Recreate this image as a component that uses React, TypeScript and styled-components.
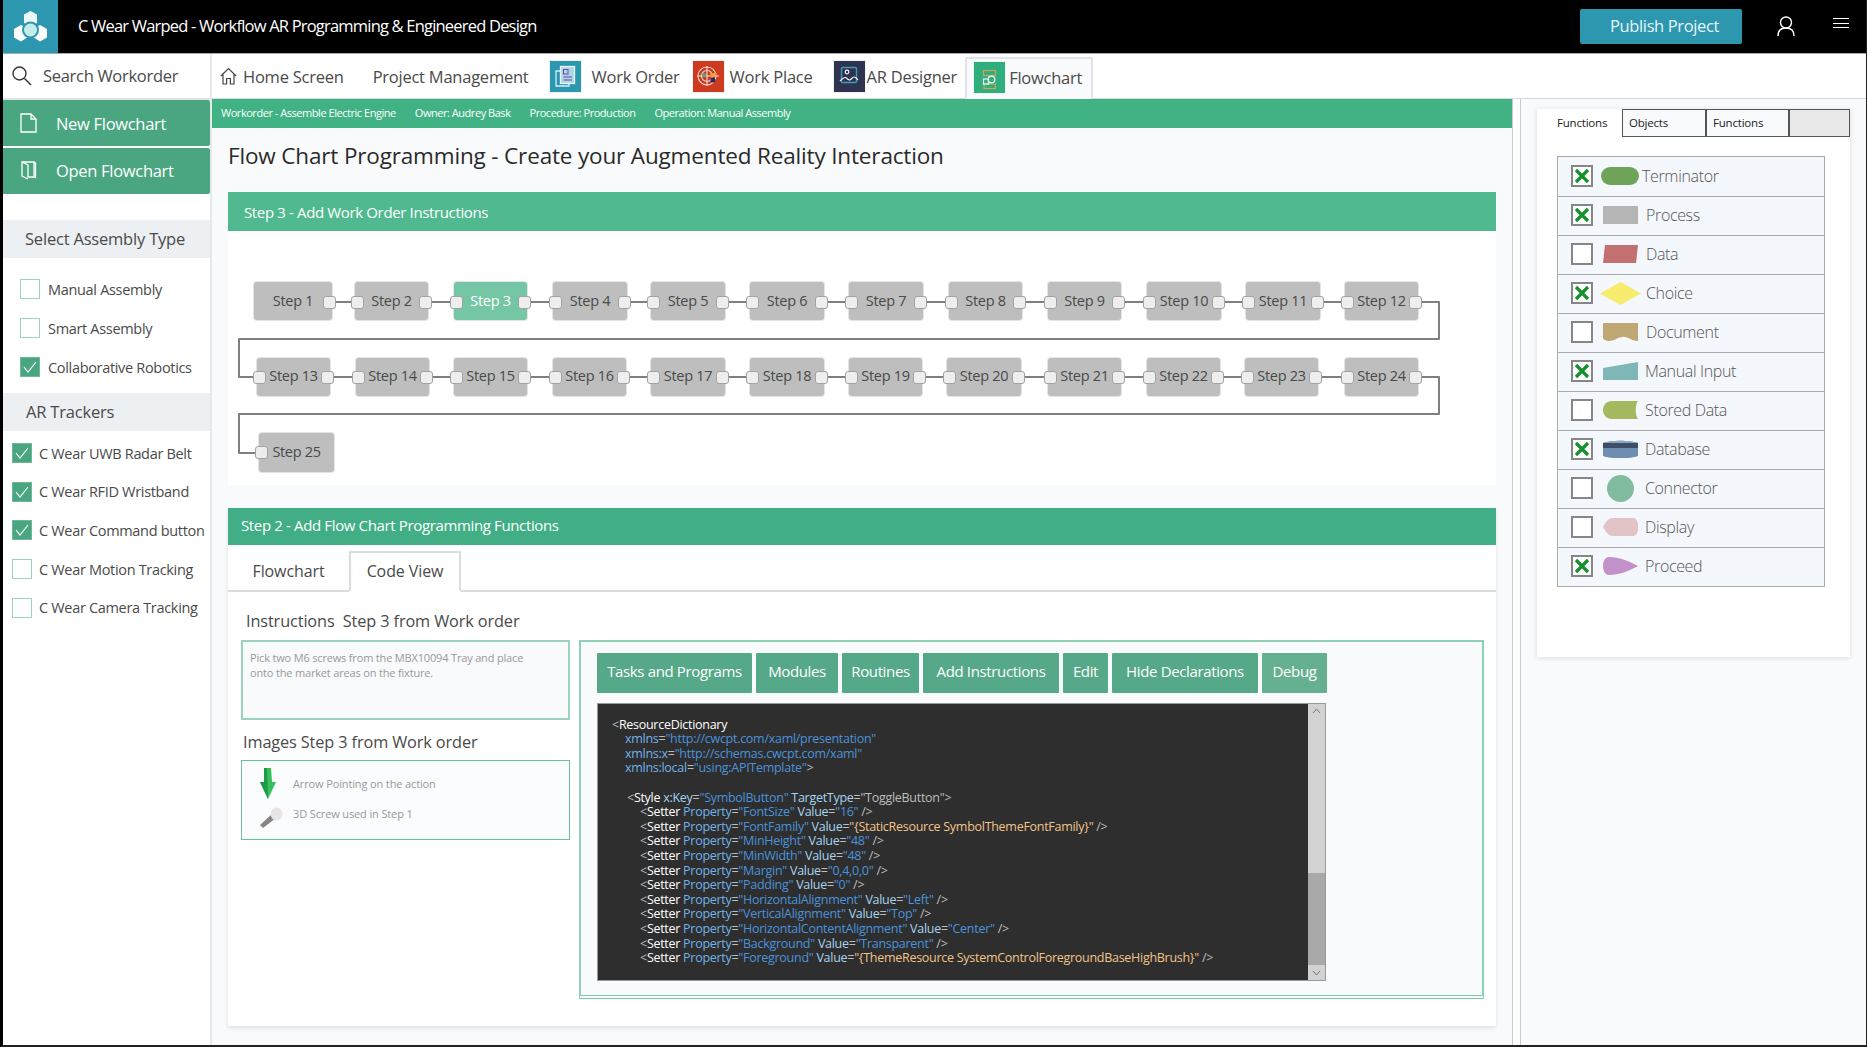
import React from "react";
import styled, { createGlobalStyle } from "styled-components";

const Global = createGlobalStyle`
  html, body { margin: 0; padding: 0; background: #000; }
  body { font-family: "Open Sans", "Noto Sans", "Liberation Sans", sans-serif; }
  * { box-sizing: border-box; }
`;

const Frame = styled.div`
  width: 1867px; height: 1047px; overflow: hidden;
  display: flex; flex-direction: column;
  background: #f9fafc;
  border-left: 3px solid #000; border-right: 1px solid #222; border-bottom: 2px solid #222;
`;
const Header = styled.header`
  height: 54px; flex: none; background: #000; border-bottom: 1px solid #a9a9a9;
  display: flex; align-items: center;
`;
const LogoBox = styled.div`
  width: 55px; height: 53px; background: #2e97b0; display: flex; align-items: center; justify-content: center;
`;
const AppTitle = styled.div`
  margin-left: 20px; color: #fff; font-size: 16.5px; letter-spacing: -0.8px; flex: 1; white-space: nowrap; padding-bottom: 3px;
`;
const Publish = styled.button`
  width: 162px; height: 35px; margin-right: 35px; border: none; border-radius: 2px;
  background: #2e97b0; color: #e3f6fa; font: inherit; font-size: 16.5px; letter-spacing: -0.38px; padding: 0 0 3px 7px;
`;
const HeaderIcon = styled.div<{ $mr: number; $mb: number }>`
  display: flex; margin-right: ${(p) => p.$mr}px; margin-bottom: ${(p) => p.$mb}px;
`;
const Body = styled.div`flex: 1; display: flex; min-height: 0;`;

const Sidebar = styled.aside`
  width: 209px; flex: none; background: #fff; border-right: 2px solid #e6e8ea; display: flex; flex-direction: column;
`;
const SearchRow = styled.div`
  height: 46px; flex: none; display: flex; align-items: center; padding: 0 0 1px 9px; gap: 11px;
  border-bottom: 2px solid #dfe2e6; font-size: 16.5px; color: #4a4a4a; letter-spacing: -0.3px;
`;
const GreenAction = styled.div<{ $up?: number }>`
  height: 46px; flex: none; background: #4aa681; color: #fff; display: flex; align-items: center;
  padding: 0 0 ${(p) => p.$up ?? 0}px 17px; gap: 19px; font-size: 16.5px; letter-spacing: -0.3px; margin-bottom: 2px;
  border-radius: 0 2px 2px 0;
`;
const SideHeading = styled.div<{ $pl: number; $mt: number }>`
  height: 38px; flex: none; margin-top: ${(p) => p.$mt}px; background: #edf0f3; color: #4a4a4a;
  display: flex; align-items: center; padding: 0 0 2px ${(p) => p.$pl}px; font-size: 16.5px; letter-spacing: -0.2px;
`;
const CheckList = styled.div<{ $pl: number; $gap: number; $pt: number }>`
  display: flex; flex-direction: column; padding: ${(p) => p.$pt}px 0 0 ${(p) => p.$pl}px; gap: ${(p) => p.$gap}px;
`;
const CheckRow = styled.div<{ $gap: number }>`
  height: 20px; display: flex; align-items: center; gap: ${(p) => p.$gap}px; font-size: 14.5px; color: #4a4a4a; letter-spacing: -0.32px; white-space: nowrap;
`;
const CheckBox = styled.span<{ $on?: boolean }>`
  width: 20px; height: 20px; flex: none; display: flex; align-items: center; justify-content: center;
  background: ${(p) => (p.$on ? "#4aa681" : "#fff")};
  border: 1.5px solid ${(p) => (p.$on ? "#6db89a" : "#9fd3c0")};
`;

const Column = styled.div`flex: 1; min-width: 0; display: flex; flex-direction: column;`;
const NavBar = styled.nav`
  height: 45px; flex: none; background: #fff; border-bottom: 1px solid #d5d8dc; display: flex; align-items: stretch; padding-left: 8px;
`;
const NavItem = styled.div<{ $ml?: number; $gap?: number; $active?: boolean }>`
  display: flex; align-items: center; margin-left: ${(p) => p.$ml ?? 0}px; gap: ${(p) => p.$gap ?? 0}px;
  font-size: 16.5px; color: #4a4a4a; letter-spacing: -0.24px; white-space: nowrap;
  ${(p) =>
    p.$active
      ? "margin-top: 3px; padding: 0 9px 3px 7px; background: #f9fafc; border: 2px solid #e0e3e7; border-bottom: none; border-radius: 2px 2px 0 0; margin-bottom: -1px;"
      : ""}
`;
const Tile = styled.div<{ $bg: string }>`
  width: 31px; height: 31px; background: ${(p) => p.$bg}; display: flex; align-items: center; justify-content: center; box-shadow: 0 0 0 1px #eef0f2;
`;
const Content = styled.div`flex: 1; min-height: 0; display: flex;`;
const Main = styled.main`width: 1300px; flex: none; display: flex; flex-direction: column;`;
const InfoBar = styled.div`
  height: 29px; flex: none; background: #40b283; color: #fff; display: flex; align-items: center;
  padding: 0 0 3px 9px; gap: 19px; font-size: 11px; letter-spacing: -0.46px; margin-right: -2px;
`;
const PageTitle = styled.h1`
  margin: 0 0 0 16px; height: 64px; display: flex; align-items: center; font-size: 22.5px; font-weight: 400; color: #2a2a2a; letter-spacing: -0.16px; padding-bottom: 10px;
`;
const Card = styled.section<{ $h: number; $mt?: number; $shadow?: boolean }>`
  margin: ${(p) => p.$mt ?? 0}px 16px 0; height: ${(p) => p.$h}px; background: #fff; flex: none; display: flex; flex-direction: column;
  ${(p) => (p.$shadow ? "box-shadow: 0 2px 4px rgba(0,0,0,.1);" : "")}
`;
const SectionBar = styled.div<{ $bg: string; $h: number; $pl: number; $dy: number }>`
  height: ${(p) => p.$h}px; flex: none; background: ${(p) => p.$bg}; color: #fff; display: flex; align-items: center;
  padding: ${(p) => (p.$dy > 0 ? p.$dy : 0)}px 0 ${(p) => (p.$dy < 0 ? -p.$dy : 0)}px ${(p) => p.$pl}px; font-size: 15px; letter-spacing: -0.36px;
`;
const Canvas = styled.div`position: relative; flex: 1;`;
const Wires = styled.svg`position: absolute; left: 0; top: 0; width: 100%; height: 100%;`;
const StepNode = styled.div<{ $x: number; $y: number; $w: number; $on?: boolean; $h?: number; $up?: number }>`
  position: absolute; left: ${(p) => p.$x}px; top: ${(p) => p.$y}px; width: ${(p) => p.$w}px; height: ${(p) => p.$h ?? 38}px;
  background: ${(p) => (p.$on ? "#75c6a4" : "#bdbebd")}; color: ${(p) => (p.$on ? "#fff" : "#4a4a4a")};
  border-radius: 3px; box-shadow: 0 0 0 1px rgba(220,222,222,.8);
  display: flex; align-items: center; justify-content: center; font-size: 14.5px; letter-spacing: -0.32px;
  padding-bottom: ${(p) => p.$up ?? 0}px;
`;
const Port = styled.span<{ $side: "l" | "r"; $top?: number }>`
  position: absolute; top: ${(p) => p.$top ?? 14}px; ${(p) => (p.$side === "l" ? "left: -4px;" : "right: -4px;")}
  width: 13px; height: 13px; background: #eee; border: 1.5px solid #a2a2a2; border-radius: 3px;
`;

const Tabs = styled.div`
  height: 47px; flex: none; display: flex; align-items: flex-end; border-bottom: 2px solid #dcdcdc;
`;
const Tab = styled.div<{ $active?: boolean; $w: number }>`
  width: ${(p) => p.$w}px; height: 41px; display: flex; align-items: center; justify-content: center;
  font-size: 16px; color: #4a4a4a; letter-spacing: -0.1px; margin-bottom: -2px; padding-bottom: 1px;
  ${(p) => (p.$active ? "background:#fff; border:2px solid #dcdcdc; border-bottom:2px solid #fff;" : "")}
`;
const Work = styled.div`flex: 1; display: flex; gap: 9px; padding: 0 12px 0 13px;`;
const LeftCol = styled.div`width: 329px; flex: none; display: flex; flex-direction: column;`;
const SubLabel = styled.div<{ $h: number; $pl: number; $pt: number }>`
  height: ${(p) => p.$h}px; display: flex; align-items: center; padding: ${(p) => p.$pt}px 0 0 ${(p) => p.$pl}px; font-size: 16.3px; color: #4a4a4a; letter-spacing: -0.12px; white-space: pre;
`;
const InstrBox = styled.div`
  height: 80px; background: #f9fafc; border: 2px solid #9ad4be; padding: 8px 7px; font-size: 11px; line-height: 15px; color: #999; letter-spacing: -0.17px;
`;
const ImgBox = styled.div`
  height: 80px; background: #fbfcfe; border: 1.5px solid #6cc0a0; display: flex; flex-direction: column; padding-left: 17px;
`;
const ImgRow = styled.div<{ $h: number; $gap: number }>`
  height: ${(p) => p.$h}px; display: flex; align-items: center; gap: ${(p) => p.$gap}px; font-size: 11px; color: #999; letter-spacing: -0.13px;
`;
const ImgText = styled.span<{ $up: number }>`margin-bottom: ${(p) => p.$up}px;`;
const CodePanel = styled.div`
  flex: 1; height: 359px; margin-top: 48px; background: #f9fafc; border: 2px solid #8fd0b8; border-bottom: 4px double #7cc8ac; padding: 11px 0 0 16px;
`;
const Toolbar = styled.div`display: flex; gap: 4px; height: 40px;`;
const ToolBtn = styled.div<{ $w: number; $light?: boolean; $raised?: boolean }>`
  width: ${(p) => p.$w}px; background: ${(p) => (p.$light ? "#66b092" : "#55a888")}; color: #fff; border-radius: 1px;
  display: flex; align-items: center; justify-content: center; font-size: 15px; letter-spacing: -0.36px; padding-bottom: ${(p) => (p.$raised ? 5 : 4)}px;
`;
const CodeWrap = styled.div`margin-top: 10px; width: 729px; height: 278px; display: flex; border: 1px solid #999;`;
const Code = styled.pre`
  margin: 0; flex: 1; background: #2e2e2e; padding: 13.5px 0 0 14px; font-family: inherit; font-size: 12.5px; line-height: 14.62px; letter-spacing: -0.28px; color: #fff; overflow: hidden;
`;
const CodeLine = styled.div<{ $i: number }>`height: 14.62px; padding-left: ${(p) => p.$i}px;`;
const Tok = styled.span<{ $c: string }>`color: ${(p) => p.$c};`;
const Scroll = styled.div`width: 17px; background: #d2d2d2; display: flex; flex-direction: column; align-items: center; justify-content: space-between; position: relative;`;
const Thumb = styled.div`position: absolute; left: 0; right: 0; top: 169px; bottom: 15px; background: #a9a9a9;`;
const Arrow = styled.svg`position: relative; margin: 4px 0;`;

const Strip = styled.div`width: 9px; flex: none; background: #fff; border-left: 1px solid #c7cad0; border-right: 1px solid #c7cad0;`;
const RightPanel = styled.div`flex: 1; padding: 10px 0 0 16px;`;
const FnCard = styled.div`width: 313px; height: 548px; background: #fff; box-shadow: 0 1px 5px rgba(0,0,0,.12);`;
const FnTabs = styled.div`display: flex; height: 28px;`;
const FnTab = styled.div<{ $active?: boolean; $grey?: boolean; $w: number }>`
  width: ${(p) => p.$w}px; font-size: 11.5px; color: #222; letter-spacing: -0.2px; display: flex; align-items: center;
  padding: 0 0 2px ${(p) => (p.$active ? 20 : 6)}px;
  background: ${(p) => (p.$active ? "#fff" : p.$grey ? "#e8e8e8" : "#f9fafc")};
  ${(p) => (p.$active ? "" : "border: 1px solid #555; border-left-width: 1.5px;")}
`;
const FnList = styled.div`margin: 19px 0 0 20px; width: 268px; border: 1px solid #a9abad;`;
const FnRow = styled.div<{ $first?: boolean }>`
  height: 39px; background: #f4f7fb; display: flex; align-items: center; padding: 0 0 2px 13px;
  ${(p) => (p.$first ? "" : "border-top: 1px solid #a9abad;")}
  font-size: 16px; font-weight: 300; color: #555; letter-spacing: -0.35px;
`;
const FnCheck = styled.span`
  width: 22px; height: 22px; flex: none; background: #fff; border: 2px solid #868686; display: flex; align-items: center; justify-content: center;
`;
const ShapeSlot = styled.span`width: 52px; flex: none; display: flex; justify-content: center; margin-right: 2px; padding-left: 2px;`;
const FnLabel = styled.span<{ $off: number }>`margin-left: ${(p) => p.$off}px;`;

/* ---------- icons ---------- */
const Logo = () => (
  <svg width="33" height="32" viewBox="0 0 33 32">
    <path d="M16.5 0l6.5 3.5V12l-6.5 3.5L10 12V3.5z" fill="#eef7f8" />
    <path d="M7 14l7 4v8l-7 4.5L0 26.500v-8.500z" fill="#fff" />
    <path d="M26 14l7 4v8.500l-7 4-7-4.500v-8z" fill="#fff" />
    <circle cx="16.500" cy="19" r="8.500" fill="#2e97b0" />
    <circle cx="16.500" cy="19" r="6.500" fill="#c4ecea" />
  </svg>
);
const SearchIcon = () => (
  <svg width="20" height="20" viewBox="0 0 20 20" fill="none" stroke="#333" strokeWidth="1.4">
    <circle cx="7.5" cy="7.5" r="6.5" /><path d="M12.5 12.5l6.5 6.5" />
  </svg>
);
const HomeIcon = () => (
  <svg width="17" height="18" viewBox="0 0 17 18" fill="none" stroke="#444" strokeWidth="1.2">
    <path d="M.8 9L8.5 1.5 16.2 9M3 7.5V17h3.6v-5.5h3.8V17H14V7.5" />
  </svg>
);
const FileIcon = () => (
  <svg width="17" height="20" viewBox="0 0 17 20" fill="none" stroke="#fff" strokeWidth="1.3">
    <path d="M1 1h10l5 5v13H1zM11 1v5h5" />
  </svg>
);
const OpenIcon = () => (
  <svg width="17" height="20" viewBox="0 0 17 20" fill="none" stroke="#fff" strokeWidth="1.3">
    <path d="M2 2h12v15H8V5L2 2v14l6 3M14 2l1.5 1v14.5L14 17" />
  </svg>
);
const Check = () => (
  <svg width="14" height="12" viewBox="0 0 14 12" fill="none" stroke="#fff" strokeWidth="1.1"><path d="M1 6l4 5 8-10" /></svg>
);
const XMark = () => (
  <svg width="16" height="16" viewBox="0 0 16 16" fill="none" stroke="#14902c" strokeWidth="3.2"><path d="M2 2l12 12M14 2L2 14" /></svg>
);
const WorkOrderIcon = () => (
  <svg width="24" height="24" viewBox="0 0 24 24" fill="none">
    <path d="M6 7H2v15h13v-2" stroke="#d5eef4" strokeWidth="1.3" />
    <rect x="6.500" y="2.500" width="14" height="17" fill="#a9d9e5" stroke="#eaf7fa" strokeWidth="1.3" />
    <rect x="9.500" y="5.500" width="4.500" height="4.500" fill="none" stroke="#7a3fb0" strokeWidth="1" />
    <path d="M9.500 13h8.500M9.500 16h8.500" stroke="#7a3fb0" strokeWidth="1.100" />
  </svg>
);
const WorkPlaceIcon = () => (
  <svg width="24" height="24" viewBox="0 0 24 24" fill="none" stroke="#f3d9d0" strokeWidth="1.100">
    <circle cx="11" cy="12" r="9" /><circle cx="11" cy="12" r="5.500" /><path d="M1 12h22M11 2v20" />
    <circle cx="8" cy="11" r="2" fill="#3bb27e" stroke="none" />
    <circle cx="17" cy="16" r="2.500" fill="#232a66" stroke="none" />
    <path d="M14 9h7l-2 4h-4z" fill="#e9a33a" stroke="none" />
  </svg>
);
const ARIcon = () => (
  <svg width="24" height="24" viewBox="0 0 24 24" fill="none" stroke="#eef6fa" strokeWidth="1.200">
    <rect x="4.500" y="3.500" width="15" height="15" rx="1" stroke="#3f9ab5" strokeWidth="1.400" />
    <circle cx="10" cy="8" r="1.800" />
    <path d="M3 17c2-1.500 3-3.500 5-3.500s2.500 2.500 4.500 2.500 2.500-3 4.500-3 3 2 4 3" />
  </svg>
);
const FlowIcon = () => (
  <svg width="24" height="24" viewBox="0 0 24 24" fill="none" stroke="#c9a75c" strokeWidth="1.200">
    <rect x="5.500" y="4.500" width="12" height="5" /><rect x="6" y="18" width="11.500" height="4.500" />
    <path d="M11 9.500V11" />
    <circle cx="13.500" cy="13.500" r="3.300" stroke="#eef7f3" /><rect x="5.500" y="13" width="5" height="5" stroke="#eef7f3" />
  </svg>
);
const DownArrow = () => (
  <svg width="18" height="31" viewBox="0 0 18 31">
    <path d="M5 0h7l1 14h4l-8 17L1 14h4z" fill="#34c15c" />
    <path d="M9 31L1 14h4L5 0h3l1 31z" fill="#1f9a44" />
  </svg>
);
const Screw = () => (
  <svg width="24" height="21" viewBox="0 0 24 21">
    <path d="M1 18L13 7l4 4L4 21z" fill="#8a8583" />
    <ellipse cx="17.500" cy="7" rx="6" ry="6.500" fill="#e8e6e4" />
  </svg>
);
const User = () => (
  <svg width="18" height="20" viewBox="0 0 18 20" fill="none" stroke="#fff" strokeWidth="1.400">
    <circle cx="9" cy="6.500" r="5.500" /><path d="M1 20c0-5 3-8 8-8s8 3 8 8" />
  </svg>
);
const Burger = () => (
  <svg width="16" height="11" viewBox="0 0 16 11" stroke="#fff" strokeWidth="1"><path d="M0 .5h16M0 5.500h16M0 9.500h16" /></svg>
);

const shapes: Record<string, React.ReactNode> = {
  Terminator: <svg width="38" height="18"><rect width="38" height="18" rx="9" fill="#6ea35a" /></svg>,
  Process: <svg width="35" height="18"><rect width="35" height="18" fill="#b5b5b5" /></svg>,
  Data: <svg width="35" height="18"><path d="M2 0h33l-2 18H0z" fill="#c27070" /></svg>,
  Choice: <svg width="41" height="23"><path d="M20.500 0L41 11.500 20.500 23 0 11.500z" fill="#f7ec6e" /></svg>,
  Document: <svg width="35" height="18"><path d="M0 0h35v18c-8 0-10-5-16-4-6 1-8 4-13 4-3 0-6-2-6-3z" fill="#bfa873" /></svg>,
  "Manual Input": <svg width="35" height="18"><path d="M0 6L35 0v18H0z" fill="#7fb6b8" /></svg>,
  "Stored Data": <svg width="35" height="18"><path d="M9 0h26c-3 3-3 15 0 18H9c-12 0-12-18 0-18z" fill="#a3b85f" /></svg>,
  Database: <svg width="35" height="18"><path d="M0 3c8-3 27-3 35 0v13c-8 3-27 3-35 0z" fill="#6e8db0" /><path d="M0 3c8-3 27-3 35 0v3c-8 2-27 2-35 0z" fill="#8aa6c4" /><rect y="3" width="35" height="5" fill="#3d4e66" /></svg>,
  Connector: <svg width="27" height="27"><circle cx="13.500" cy="13.500" r="13.500" fill="#82bca0" /></svg>,
  Display: <svg width="35" height="18"><path d="M10 0h20c7 0 7 18 0 18H10C5 18 2 13 0 9c2-4 5-9 10-9z" fill="#e2c4c8" /></svg>,
  Proceed: <svg width="35" height="18"><path d="M6 0c10 0 20 4 29 9-9 5-19 9-29 9-8 0-8-18 0-18z" fill="#c291c9" /></svg>,
};
const fns: [string, boolean, number][] = [
  ["Terminator", true, -5], ["Process", true, -1], ["Data", false, -1], ["Choice", true, -1],
  ["Document", false, -1], ["Manual Input", true, -2], ["Stored Data", false, -2], ["Database", true, -2],
  ["Connector", false, -2], ["Display", false, -2], ["Proceed", true, -2],
];

/* ---------- data ---------- */
const row1 = [[26, 78], [127, 73], [226, 73], [325, 74], [423, 74], [522, 74], [621, 74], [721, 73], [820, 73], [919, 74], [1018, 74], [1117, 73]];
const row2 = [[29, 73], [128, 73], [226, 73], [325, 73], [423, 74], [522, 74], [621, 73], [719, 74], [820, 73], [919, 73], [1017, 73], [1117, 73]];
const wirePath = "M90 71H1211V108H11V146H1211V183H11V222H40";

const C = { tag: "#ffffff", punct: "#bdbdbd", attr: "#6fb3ea", attr2: "#a8d4f2", str: "#4a93dc", org: "#f2c488" };
type T = [string, string];
const setter = (p: string, v: string, orange = false): { i: number; t: T[] } => ({
  i: 28,
  t: [
    [C.punct, "<"], [C.tag, "Setter "], [C.attr, "Property"], [C.punct, "="], [C.str, `"${p}" `],
    [C.attr2, "Value"], [C.punct, "="], [orange ? C.org : C.str, `"${v}"`], [C.punct, " />"],
  ],
});
const code: { i: number; t: T[] }[] = [
  { i: 0, t: [[C.punct, "<"], [C.tag, "ResourceDictionary"]] },
  { i: 13, t: [[C.attr, "xmlns"], [C.punct, "="], [C.str, '"http://cwcpt.com/xaml/presentation"']] },
  { i: 13, t: [[C.attr, "xmlns:x"], [C.punct, "="], [C.str, '"http://schemas.cwcpt.com/xaml"']] },
  { i: 13, t: [[C.attr, "xmlns:local"], [C.punct, "="], [C.str, '"using:APITemplate"'], [C.punct, ">"]] },
  { i: 0, t: [] },
  { i: 15, t: [[C.punct, "<"], [C.tag, "Style "], [C.attr2, "x:Key"], [C.punct, "="], [C.str, '"SymbolButton" '], [C.attr2, "TargetType"], [C.punct, "="], [C.punct, '"ToggleButton">']] },
  setter("FontSize", "16"),
  setter("FontFamily", "{StaticResource SymbolThemeFontFamily}", true),
  setter("MinHeight", "48"), setter("MinWidth", "48"), setter("Margin", "0,4,0,0"), setter("Padding", "0"),
  setter("HorizontalAlignment", "Left"), setter("VerticalAlignment", "Top"), setter("HorizontalContentAlignment", "Center"),
  setter("Background", "Transparent"), setter("Foreground", "{ThemeResource SystemControlForegroundBaseHighBrush}", true),
];
const tools: { t: string; w: number; light?: boolean; raised?: boolean }[] = [
  { t: "Tasks and Programs", w: 155 }, { t: "Modules", w: 82 }, { t: "Routines", w: 77 }, { t: "Add Instructions", w: 136 },
  { t: "Edit", w: 45, raised: true }, { t: "Hide Declarations", w: 146, raised: true }, { t: "Debug", w: 65, light: true, raised: true },
];

export default function App() {
  let n = 0;
  return (
    <>
      <Global />
      <Frame>
        <Header>
          <LogoBox><Logo /></LogoBox>
          <AppTitle>C Wear Warped - Workflow AR Programming &amp; Engineered Design</AppTitle>
          <Publish>Publish Project</Publish>
          <HeaderIcon $mr={38} $mb={1}><User /></HeaderIcon>
          <HeaderIcon $mr={17} $mb={6}><Burger /></HeaderIcon>
        </Header>
        <Body>
          <Sidebar>
            <SearchRow><SearchIcon />Search Workorder</SearchRow>
            <GreenAction><FileIcon />New Flowchart</GreenAction>
            <GreenAction $up={2}><OpenIcon />Open Flowchart</GreenAction>
            <SideHeading $pl={22} $mt={24}>Select Assembly Type</SideHeading>
            <CheckList $pl={17} $gap={19} $pt={21}>
              <CheckRow $gap={8}><CheckBox />Manual Assembly</CheckRow>
              <CheckRow $gap={8}><CheckBox />Smart Assembly</CheckRow>
              <CheckRow $gap={8}><CheckBox $on><Check /></CheckBox>Collaborative Robotics</CheckRow>
            </CheckList>
            <SideHeading $pl={23} $mt={16}>AR Trackers</SideHeading>
            <CheckList $pl={9} $gap={18.7} $pt={12}>
              <CheckRow $gap={7}><CheckBox $on><Check /></CheckBox>C Wear UWB Radar Belt</CheckRow>
              <CheckRow $gap={7}><CheckBox $on><Check /></CheckBox>C Wear RFID Wristband</CheckRow>
              <CheckRow $gap={7}><CheckBox $on><Check /></CheckBox>C Wear Command button</CheckRow>
              <CheckRow $gap={7}><CheckBox />C Wear Motion Tracking</CheckRow>
              <CheckRow $gap={7}><CheckBox />C Wear Camera Tracking</CheckRow>
            </CheckList>
          </Sidebar>
          <Column>
            <NavBar>
              <NavItem $gap={6}><HomeIcon />Home Screen</NavItem>
              <NavItem $ml={29}>Project Management</NavItem>
              <NavItem $ml={22} $gap={10}><Tile $bg="#2e97b0"><WorkOrderIcon /></Tile>Work Order</NavItem>
              <NavItem $ml={13} $gap={6}><Tile $bg="#cd3a1f"><WorkPlaceIcon /></Tile>Work Place</NavItem>
              <NavItem $ml={21} $gap={2}><Tile $bg="#2f3350"><ARIcon /></Tile>AR Designer</NavItem>
              <NavItem $ml={8} $gap={4} $active><Tile $bg="#2fae7e"><FlowIcon /></Tile>Flowchart</NavItem>
            </NavBar>
            <Content>
              <Main>
                <InfoBar>
                  <span>Workorder - Assemble Electric Engine</span>
                  <span>Owner: Audrey Bask</span>
                  <span>Procedure: Production</span>
                  <span>Operation: Manual Assembly</span>
                </InfoBar>
                <PageTitle>Flow Chart Programming - Create your Augmented Reality Interaction</PageTitle>
                <Card $h={293}>
                  <SectionBar $bg="#50b98f" $h={39} $pl={16} $dy={1}>Step 3 - Add Work Order Instructions</SectionBar>
                  <Canvas>
                    <Wires viewBox="0 0 1268 254" fill="none" stroke="#7f7f7f" strokeWidth="2" strokeLinejoin="round">
                      <path d={wirePath} />
                    </Wires>
                    {row1.map(([x, w]) => {
                      n += 1;
                      return (
                        <StepNode key={n} $x={x} $y={51} $w={w} $on={n === 3} $up={1}>
                          {n > 1 && <Port $side="l" />}Step {n}<Port $side="r" />
                        </StepNode>
                      );
                    })}
                    {row2.map(([x, w]) => {
                      n += 1;
                      return (
                        <StepNode key={n} $x={x} $y={127} $w={w} $up={3}>
                          <Port $side="l" $top={13} />Step {n}<Port $side="r" $top={13} />
                        </StepNode>
                      );
                    })}
                    <StepNode $x={31} $y={202} $w={75} $h={39} $up={2}><Port $side="l" $top={13} />Step 25</StepNode>
                  </Canvas>
                </Card>
                <Card $h={518} $mt={23} $shadow>
                  <SectionBar $bg="#41ae85" $h={37} $pl={13} $dy={-4}>Step 2 - Add Flow Chart Programming Functions</SectionBar>
                  <Tabs>
                    <Tab $w={121}>Flowchart</Tab>
                    <Tab $w={112} $active>Code View</Tab>
                  </Tabs>
                  <Work>
                    <LeftCol>
                      <SubLabel $h={48} $pl={5} $pt={9}>Instructions  Step 3 from Work order</SubLabel>
                      <InstrBox>Pick two M6 screws from the MBX10094 Tray and place<br />onto the market areas on the fixture.</InstrBox>
                      <SubLabel $h={40} $pl={2} $pt={3}>Images Step 3 from Work order</SubLabel>
                      <ImgBox>
                        <ImgRow $h={44} $gap={16}><DownArrow /><ImgText $up={0}>Arrow Pointing on the action</ImgText></ImgRow>
                        <ImgRow $h={24} $gap={10}><Screw /><ImgText $up={7}>3D Screw used in Step 1</ImgText></ImgRow>
                      </ImgBox>
                    </LeftCol>
                    <CodePanel>
                      <Toolbar>
                        {tools.map((b) => <ToolBtn key={b.t} $w={b.w} $light={b.light} $raised={b.raised}>{b.t}</ToolBtn>)}
                      </Toolbar>
                      <CodeWrap>
                        <Code>
                          {code.map((l, i) => (
                            <CodeLine key={i} $i={l.i}>
                              {l.t.map(([c, s], j) => <Tok key={j} $c={c}>{s}</Tok>)}
                            </CodeLine>
                          ))}
                        </Code>
                        <Scroll>
                          <Thumb />
                          <Arrow width="9" height="6" viewBox="0 0 9 6" fill="none" stroke="#777"><path d="M1 5l3.5-4L8 5" /></Arrow>
                          <Arrow width="9" height="6" viewBox="0 0 9 6" fill="none" stroke="#777"><path d="M1 1l3.5 4L8 1" /></Arrow>
                        </Scroll>
                      </CodeWrap>
                    </CodePanel>
                  </Work>
                </Card>
              </Main>
              <Strip />
              <RightPanel>
                <FnCard>
                  <FnTabs>
                    <FnTab $w={85} $active>Functions</FnTab>
                    <FnTab $w={84}>Objects</FnTab>
                    <FnTab $w={83}>Functions</FnTab>
                    <FnTab $w={61} $grey />
                  </FnTabs>
                  <FnList>
                    {fns.map(([name, on, off], i) => (
                      <FnRow key={name} $first={i === 0}>
                        <FnCheck>{on && <XMark />}</FnCheck>
                        <ShapeSlot>{shapes[name]}</ShapeSlot>
                        <FnLabel $off={off}>{name}</FnLabel>
                      </FnRow>
                    ))}
                  </FnList>
                </FnCard>
              </RightPanel>
            </Content>
          </Column>
        </Body>
      </Frame>
    </>
  );
}
